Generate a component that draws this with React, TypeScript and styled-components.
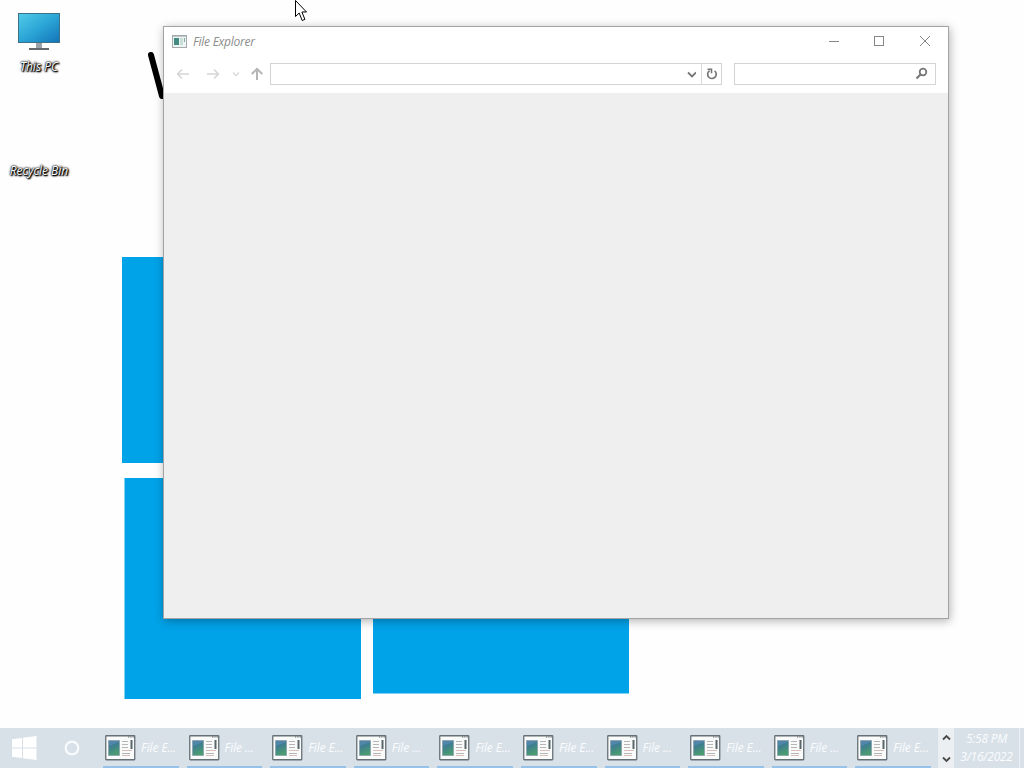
import React from 'react';
import styled, { createGlobalStyle } from 'styled-components';

const GlobalStyle = createGlobalStyle`
  * {
    box-sizing: border-box;
  }
  body {
    margin: 0;
    overflow: hidden;
    font-family: 'Open Sans', 'Noto Sans', sans-serif;
    font-style: italic;
    font-size: 12px;
  }
`;

const Screen = styled.div`
  position: relative;
  display: flex;
  flex-direction: column;
  width: 1024px;
  height: 768px;
  overflow: hidden;
  background: #fefefe;
`;

const Desktop = styled.main`
  position: relative;
  flex: 1;
`;

const Wallpaper = styled.svg`
  position: absolute;
  top: 0;
  left: 0;
`;

const Shortcuts = styled.div`
  position: relative;
  display: flex;
  flex-direction: column;
  width: 78px;
  padding-top: 12px;
`;

const Shortcut = styled.div`
  display: flex;
  flex-direction: column;
  align-items: center;
  height: 104px;
`;

const ShortcutIcon = styled.div`
  height: 47px;
`;

const ShortcutLabel = styled.span`
  color: #fff;
  font-size: 12px;
  line-height: 16px;
  white-space: nowrap;
  text-shadow: 0 0 1px #000, 1px 1px 1px #000, 1px 1px 2px #000, 0 0 2px #111, 0 0 3px #666;
`;

const Window = styled.section`
  position: absolute;
  top: 26px;
  left: 163px;
  display: flex;
  flex-direction: column;
  width: 786px;
  height: 593px;
  border: 1px solid #a3a3a3;
  background: #fff;
  box-shadow: 1px 2px 9px rgba(0, 0, 0, 0.3);
`;

const TitleBar = styled.header`
  display: flex;
  align-items: center;
  height: 29px;
  padding-left: 8px;
`;

const Title = styled.h1`
  flex: 1;
  margin: 0 0 0 5px;
  padding-top: 1px;
  color: #8c8c8c;
  font-size: 12px;
  font-weight: 400;
  line-height: 16px;
  letter-spacing: -0.25px;
`;

const WindowButton = styled.button`
  display: flex;
  align-items: center;
  justify-content: center;
  width: 45.5px;
  height: 29px;
  padding: 0 0 2px;
  border: 0;
  background: none;
`;

const Toolbar = styled.div`
  display: flex;
  align-items: center;
  height: 37px;
  padding: 0 12px 2px 11px;
`;

const NavIcons = styled.svg`
  width: 95px;
  height: 22px;
`;

const AddressBar = styled.div`
  display: flex;
  justify-content: flex-end;
  width: 452px;
  height: 22px;
  border: 1px solid #d4d4d4;
`;

const AddressButton = styled.div<{ $divided?: boolean }>`
  display: flex;
  align-items: center;
  justify-content: center;
  width: 20px;
  border-left: ${({ $divided }) => ($divided ? '1px solid #d9d9d9' : '0')};
`;

const SearchBox = styled.div`
  display: flex;
  align-items: center;
  justify-content: flex-end;
  width: 202px;
  height: 22px;
  margin-left: 12px;
  padding-right: 7px;
  border: 1px solid #d4d4d4;
`;

const Content = styled.div`
  flex: 1;
  background: #efefef;
`;

const Cursor = styled.svg`
  position: absolute;
  top: 0;
  left: 294px;
`;

const Taskbar = styled.footer`
  display: flex;
  height: 40px;
  background: #d9e1e8;
`;

const TaskbarButton = styled.div<{ $width: number }>`
  display: flex;
  align-items: center;
  justify-content: center;
  width: ${({ $width }) => $width}px;
`;

const TaskList = styled.div`
  display: flex;
  gap: 8px;
  width: 842px;
  padding-left: 7px;
`;

const Task = styled.div`
  display: flex;
  align-items: center;
  flex: none;
  width: 75.6px;
  padding: 1px 0 0 2px;
  border-bottom: 2px solid #96c1ea;
`;

const TaskLabel = styled.span`
  margin-left: 5px;
  color: #fafcfe;
  font-size: 12px;
  line-height: 16px;
  letter-spacing: -0.1px;
  white-space: nowrap;
`;

const Scroller = styled.div`
  display: flex;
  flex-direction: column;
  align-items: center;
  justify-content: space-between;
  width: 16px;
  padding: 6px 0 5px;
  background: #eceff1;
`;

const Clock = styled.div`
  display: flex;
  flex-direction: column;
  align-items: center;
  width: 66px;
  padding-top: 2px;
  border-right: 1px solid #eef2f5;
  color: #fafcfe;
  font-size: 12px;
  line-height: 18px;
  letter-spacing: -0.25px;
`;

const tasks = [
  'File E...',
  'File ...',
  'File E...',
  'File ...',
  'File E...',
  'File E...',
  'File ...',
  'File E...',
  'File ...',
  'File E...',
];

const MonitorIcon = () => (
  <svg width="44" height="40" viewBox="0 0 44 40">
    <defs>
      <linearGradient id="monitor" x1="0" y1="0" x2="1" y2="1">
        <stop offset="0" stopColor="#52cbe9" />
        <stop offset="0.5" stopColor="#2ba6d6" />
        <stop offset="1" stopColor="#1273b8" />
      </linearGradient>
    </defs>
    <path d="M19 31h6v6h-6z" fill="#9aa3a8" />
    <path d="M12 36h20v2H12z" fill="#63696d" />
    <rect x="1.5" y="1.5" width="41" height="29" fill="url(#monitor)" stroke="#3c7188" />
  </svg>
);

const ProgramIcon = () => (
  <svg width="31" height="26" viewBox="0 0 31 26">
    <defs>
      <linearGradient id="program" x1="0" y1="0" x2="0.3" y2="1">
        <stop offset="0" stopColor="#447aa0" />
        <stop offset="0.45" stopColor="#3f7f8e" />
        <stop offset="1" stopColor="#4a9c70" />
      </linearGradient>
    </defs>
    <rect x="0.75" y="0.75" width="29" height="24" rx="0.5" fill="#f9fbfb" stroke="#667075" strokeWidth="1.3" />
    <path d="M23 2h1.2M25.300 2h1.2M27.600 2h1.200" stroke="#5c6365" strokeWidth="1.2" />
    <path d="M3.500 5.500h11v15h-11z" fill="url(#program)" stroke="#8ba0ac" strokeWidth="0.8" />
    <path d="M4 11q5-2 10-4V6H4z" fill="#4f86aa" />
    <path d="M17 6.500h6M17 9.500h6M17 12.500h6M17 18.500h8" stroke="#b5b5b5" />
    <path d="M17 15.500h10M17 20.500h8" stroke="#dbbdb9" />
    <path d="M26.500 5v9" stroke="#59666b" strokeWidth="2" />
  </svg>
);

const TitleIcon = () => (
  <svg width="16" height="14" viewBox="0 0 16 14">
    <rect x="0.5" y="0.5" width="14" height="12" fill="#edf5f3" stroke="#a4aaac" />
    <path d="M1 1.5h13" stroke="#c3c9ca" />
    <path d="M2 3h5v7H2z" fill="#438a82" />
    <path d="M8 3h3v7H8z" fill="#c5ded8" />
    <path d="M12.5 3v4" stroke="#85aaa5" />
  </svg>
);

const App = () => {
  return (
    <>
      <GlobalStyle />
      <Screen>
        <Desktop>
          <Wallpaper width="1024" height="728">
            <path d="M151 55 162 96" stroke="#000" strokeWidth="6" strokeLinecap="round" />
            <path d="M122 257h70v206h-70zM124.500 478h236.500v221H124.500zM373 478h256v215.500H373z" fill="#00a2e8" />
          </Wallpaper>
          <Shortcuts>
            <Shortcut>
              <ShortcutIcon>
                <MonitorIcon />
              </ShortcutIcon>
              <ShortcutLabel>This PC</ShortcutLabel>
            </Shortcut>
            <Shortcut>
              <ShortcutIcon />
              <ShortcutLabel>Recycle Bin</ShortcutLabel>
            </Shortcut>
          </Shortcuts>
          <Window>
            <TitleBar>
              <TitleIcon />
              <Title>File Explorer</Title>
              <WindowButton aria-label="Minimize">
                <svg width="12" height="12">
                  <path d="M1 6.500h10" stroke="#858585" />
                </svg>
              </WindowButton>
              <WindowButton aria-label="Maximize">
                <svg width="12" height="12">
                  <rect x="0.500" y="1.500" width="9" height="9" fill="none" stroke="#858585" />
                </svg>
              </WindowButton>
              <WindowButton aria-label="Close">
                <svg width="12" height="12">
                  <path d="m1 1 10 10M11 1 1 11" stroke="#858585" />
                </svg>
              </WindowButton>
            </TitleBar>
            <Toolbar>
              <NavIcons viewBox="0 0 95 22" fill="none">
                <path d="M14 11H2.500M7 6.500 2.500 11 7 15.500M32 11h11.500M39 6.500l4.500 4.500-4.500 4.500" stroke="#d5d5d5" strokeWidth="1.5" />
                <path d="m58 9.500 3 3 3-3" stroke="#d8d8d8" strokeWidth="1.3" />
                <path d="M82 17V6M76.800 11 82 5.800 87.200 11" stroke="#b5b5b5" strokeWidth="2" />
              </NavIcons>
              <AddressBar>
                <AddressButton>
                  <svg width="10" height="10" fill="none">
                    <path d="m2 3.500 4 4 4-4" stroke="#777" strokeWidth="1.800" />
                  </svg>
                </AddressButton>
                <AddressButton $divided>
                  <svg width="12" height="14" fill="none">
                    <path d="M3.600 3.600A4.300 4.300 0 1 0 8.600 3.800" stroke="#777" strokeWidth="1.700" />
                    <path d="M1.500 2.300h4v4" stroke="#777" strokeWidth="1.600" />
                  </svg>
                </AddressButton>
              </AddressBar>
              <SearchBox>
                <svg width="13" height="13" fill="none">
                  <circle cx="8" cy="5" r="3.300" stroke="#777" strokeWidth="1.800" />
                  <path d="m5.500 7.500-4 4" stroke="#777" strokeWidth="2.200" />
                </svg>
              </SearchBox>
            </Toolbar>
            <Content />
          </Window>
        </Desktop>
        <Taskbar>
          <TaskbarButton $width={48}>
            <svg width="26" height="26" fill="#fff">
              <path d="M1 4.300 11 3v9.500H1zM12 2.800 25.500 1v11.500H12zM1 13.500h10V23L1 21.700zM12 13.500h13.500V25L12 23.200z" />
            </svg>
          </TaskbarButton>
          <TaskbarButton $width={48}>
            <svg width="16" height="16" fill="none">
              <circle cx="8" cy="8" r="6.300" stroke="#f8fbfe" strokeWidth="2.200" />
            </svg>
          </TaskbarButton>
          <TaskList>
            {tasks.map((task, index) => (
              <Task key={index}>
                <ProgramIcon />
                <TaskLabel>{task}</TaskLabel>
              </Task>
            ))}
          </TaskList>
          <Scroller>
            <svg width="9" height="7" fill="none">
              <path d="m1 5.500 3.500-3.500L8 5.500" stroke="#4a4a4a" strokeWidth="1.800" />
            </svg>
            <svg width="9" height="7" fill="none">
              <path d="M1 1.500 4.500 5 8 1.500" stroke="#4a4a4a" strokeWidth="1.800" />
            </svg>
          </Scroller>
          <Clock>
            <span>5:58 PM</span>
            <span>3/16/2022</span>
          </Clock>
        </Taskbar>
        <Cursor width="14" height="23" viewBox="0 0 14 23">
          <path
            d="M1.500.5v16l3.700-3.500 3 7.500 2.700-1.100-3-7.400h4.600z"
            fill="#fff"
            stroke="#000"
            strokeWidth="1"
          />
        </Cursor>
      </Screen>
    </>
  );
};

export default App;
